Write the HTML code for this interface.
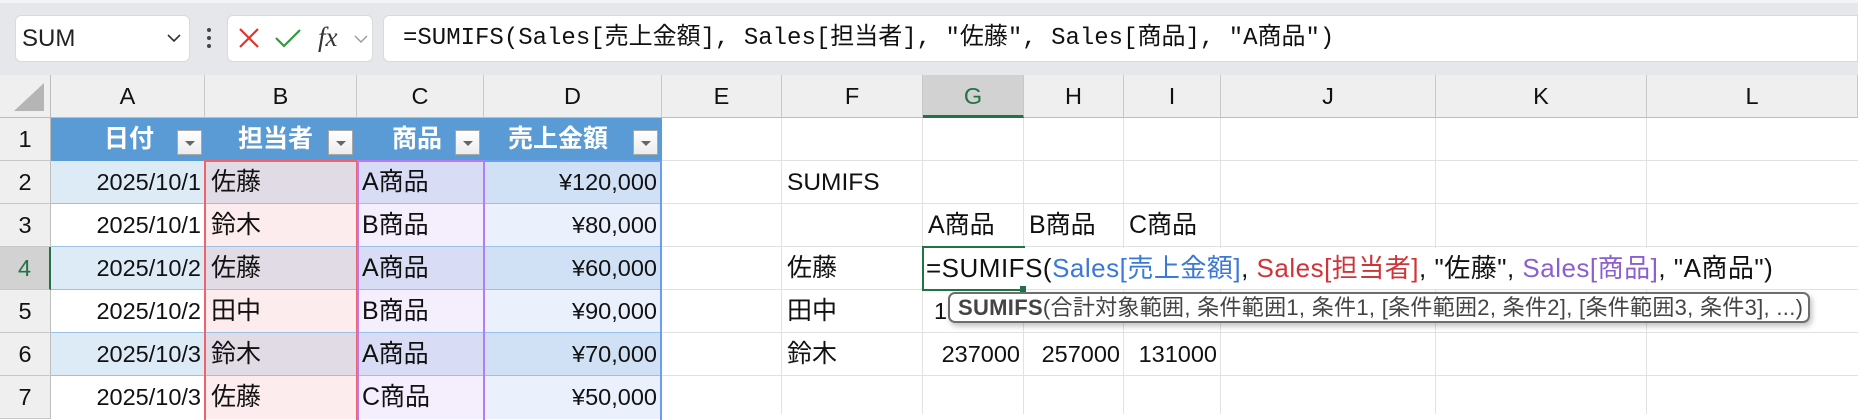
<!DOCTYPE html>
<html><head><meta charset="utf-8">
<style>
*{margin:0;padding:0;box-sizing:border-box}
body{width:1858px;height:414px;overflow:hidden;background:#fff;position:relative;font-family:"Liberation Sans","Noto Sans CJK JP",sans-serif;font-size:23.5px;color:#111}
.a{position:absolute}
.t{position:absolute;line-height:43px;height:43px;white-space:nowrap}
.j{font-size:25px}
.hl{position:absolute;height:1px;background:#e1e1e1}
.vl{position:absolute;width:1px;background:#e1e1e1}
.ch{position:absolute;top:75px;height:43px;line-height:43px;text-align:center;background:#efefef;border-right:1px solid #c8c8c8;border-bottom:1px solid #bdbdbd}
.rh{position:absolute;left:0;width:51px;height:43px;line-height:43px;text-align:center;background:#efefef;border-bottom:1px solid #c8c8c8;border-right:1px solid #bdbdbd}
.dd{position:absolute;width:25px;height:25px;background:linear-gradient(#fff,#ececec);border:1px solid #a8a8a8}
.dd:after{content:"";position:absolute;left:7px;top:10px;border-left:5px solid transparent;border-right:5px solid transparent;border-top:5px solid #666}
.hd{position:absolute;top:118px;height:43px;line-height:43px;color:#fff;font-weight:bold;font-size:25px}
</style></head><body>
<div class="a" style="left:0;top:0;width:1858px;height:75px;background:#e6e7ea"></div>
<div class="a" style="left:0;top:0;width:1858px;height:3px;background:#f4f4f6"></div>
<div class="a" style="left:15px;top:15px;width:175px;height:47px;background:#fff;border:1px solid #dadada;border-radius:6px"></div>
<div class="t" style="left:22px;top:17px;font-size:24px;color:#222">SUM</div>
<svg class="a" style="left:166px;top:32px" width="16" height="12"><path d="M2 3 L8 9 L14 3" stroke="#333" stroke-width="1.6" fill="none"/></svg>
<div class="a" style="left:207px;top:28px;width:4px;height:4px;background:#444;border-radius:2px"></div>
<div class="a" style="left:207px;top:36px;width:4px;height:4px;background:#444;border-radius:2px"></div>
<div class="a" style="left:207px;top:44px;width:4px;height:4px;background:#444;border-radius:2px"></div>
<div class="a" style="left:227px;top:15px;width:146px;height:47px;background:#fff;border:1px solid #dadada;border-radius:6px"></div>
<svg class="a" style="left:237px;top:26px" width="24" height="24"><path d="M3 3 L21 21 M21 3 L3 21" stroke="#e0352b" stroke-width="2.2"/></svg>
<svg class="a" style="left:274px;top:26px" width="28" height="24"><path d="M2 12 L10 20 L26 4" stroke="#2f9a3e" stroke-width="2.2" fill="none"/></svg>
<div class="t" style="left:318px;top:16px;font-family:'Liberation Serif',serif;font-style:italic;font-size:27px;color:#333">fx</div>
<svg class="a" style="left:353px;top:33px" width="16" height="12"><path d="M2 3 L8 9 L14 3" stroke="#999" stroke-width="1.4" fill="none"/></svg>
<div class="a" style="left:383px;top:15px;width:1475px;height:47px;background:#fff;border:1px solid #dadada;border-radius:6px 0 0 6px"></div>
<div class="t" style="left:403px;top:17px;font-family:'Liberation Mono','Noto Sans CJK JP',monospace;font-size:24px;color:#111">=SUMIFS(Sales[売上金額], Sales[担当者], "佐藤", Sales[商品], "A商品")</div>

<div class="a" style="left:0;top:75px;width:51px;height:43px;background:#efefef;border-right:1px solid #bdbdbd;border-bottom:1px solid #bdbdbd"></div>
<svg class="a" style="left:12px;top:81px" width="34" height="32"><path d="M32 2 L32 30 L2 30 Z" fill="#b5b5b5"/></svg>
<div class="ch" style="left:51px;width:154px">A</div>
<div class="ch" style="left:205px;width:152px">B</div>
<div class="ch" style="left:357px;width:127px">C</div>
<div class="ch" style="left:484px;width:178px">D</div>
<div class="ch" style="left:662px;width:120px">E</div>
<div class="ch" style="left:782px;width:141px">F</div>
<div class="ch" style="left:923px;width:101px;background:#d2d2d2;color:#217346;border-bottom:3px solid #217346">G</div>
<div class="ch" style="left:1024px;width:100px">H</div>
<div class="ch" style="left:1124px;width:97px">I</div>
<div class="ch" style="left:1221px;width:215px">J</div>
<div class="ch" style="left:1436px;width:211px">K</div>
<div class="ch" style="left:1647px;width:211px">L</div>

<div class="rh" style="top:118px">1</div>
<div class="rh" style="top:161px">2</div>
<div class="rh" style="top:204px">3</div>
<div class="rh" style="top:247px;background:#d2d2d2;color:#217346;border-right:2px solid #217346">4</div>
<div class="rh" style="top:290px">5</div>
<div class="rh" style="top:333px">6</div>
<div class="rh" style="top:376px">7</div>

<div id="grid"></div>
<div class="a" style="left:51px;top:118px;width:611px;height:43px;background:#5b9bd5"></div>
<div id="fills"></div>

<div class="hd" style="left:104px">日付</div><div class="dd" style="left:177px;top:130px"></div>
<div class="hd" style="left:238px">担当者</div><div class="dd" style="left:328px;top:130px"></div>
<div class="hd" style="left:392px">商品</div><div class="dd" style="left:455px;top:130px"></div>
<div class="hd" style="left:508px">売上金額</div><div class="dd" style="left:633px;top:130px"></div>

<div class="t" style="left:51px;width:150px;text-align:right;top:161px">2025/10/1</div>
<div class="t" style="left:51px;width:150px;text-align:right;top:204px">2025/10/1</div>
<div class="t" style="left:51px;width:150px;text-align:right;top:247px">2025/10/2</div>
<div class="t" style="left:51px;width:150px;text-align:right;top:290px">2025/10/2</div>
<div class="t" style="left:51px;width:150px;text-align:right;top:333px">2025/10/3</div>
<div class="t" style="left:51px;width:150px;text-align:right;top:376px">2025/10/3</div>
<div class="t j" style="left:211px;top:161px">佐藤</div>
<div class="t j" style="left:211px;top:204px">鈴木</div>
<div class="t j" style="left:211px;top:247px">佐藤</div>
<div class="t j" style="left:211px;top:290px">田中</div>
<div class="t j" style="left:211px;top:333px">鈴木</div>
<div class="t j" style="left:211px;top:376px">佐藤</div>
<div class="t j" style="left:362px;top:161px">A商品</div>
<div class="t j" style="left:362px;top:204px">B商品</div>
<div class="t j" style="left:362px;top:247px">A商品</div>
<div class="t j" style="left:362px;top:290px">B商品</div>
<div class="t j" style="left:362px;top:333px">A商品</div>
<div class="t j" style="left:362px;top:376px">C商品</div>
<div class="t" style="left:484px;width:173px;text-align:right;top:161px">¥120,000</div>
<div class="t" style="left:484px;width:173px;text-align:right;top:204px">¥80,000</div>
<div class="t" style="left:484px;width:173px;text-align:right;top:247px">¥60,000</div>
<div class="t" style="left:484px;width:173px;text-align:right;top:290px">¥90,000</div>
<div class="t" style="left:484px;width:173px;text-align:right;top:333px">¥70,000</div>
<div class="t" style="left:484px;width:173px;text-align:right;top:376px">¥50,000</div>

<div class="t" style="left:787px;top:161px;font-size:24.5px">SUMIFS</div>
<div class="t j" style="left:928px;top:204px">A商品</div>
<div class="t j" style="left:1029px;top:204px">B商品</div>
<div class="t j" style="left:1129px;top:204px">C商品</div>
<div class="t j" style="left:787px;top:247px">佐藤</div>
<div class="t j" style="left:787px;top:290px">田中</div>
<div class="t j" style="left:787px;top:333px">鈴木</div>
<div class="t" style="left:934px;top:290px">1</div>
<div class="t" style="left:923px;width:97px;text-align:right;top:333px">237000</div>
<div class="t" style="left:1024px;width:96px;text-align:right;top:333px">257000</div>
<div class="t" style="left:1124px;width:93px;text-align:right;top:333px">131000</div>

<div class="a" style="left:924px;top:248px;width:866px;height:41px;background:#fff"></div>
<div class="a" style="left:922px;top:246px;width:103px;height:45px;border:2px solid #217346;border-right:none"></div>
<div class="a" style="left:1020px;top:286px;width:6px;height:6px;background:#217346"></div>
<div class="t" style="left:926px;top:247px;font-size:26px;letter-spacing:.5px">=SUMIFS(<span style="color:#3b78d8">Sales[売上金額]</span>, <span style="color:#d13438">Sales[担当者]</span>, "佐藤", <span style="color:#8c5fd0">Sales[商品]</span>, "A商品")</div>

<div class="a" style="left:948px;top:292px;width:862px;height:31px;background:#fff;border:2px solid #6e6e6e;border-radius:7px;box-shadow:2px 3px 6px rgba(0,0,0,.25)"></div>
<div class="t" style="left:958px;top:286px;font-size:22px;letter-spacing:.3px;color:#444"><b>SUMIFS</b>(合計対象範囲, 条件範囲1, 条件1, [条件範囲2, 条件2], [条件範囲3, 条件3], ...)</div>

<script>
var g='';var xs=[205,357,484,662,782,923,1024,1124,1221,1436,1647];
xs.forEach(function(x){g+='<div class="vl" style="left:'+(x-1)+'px;top:118px;height:296px"></div>'});
[161,204,247,290,333,376].forEach(function(y){g+='<div class="hl" style="left:51px;top:'+(y-1)+'px;width:1807px"></div>'});
document.getElementById('grid').innerHTML=g;
var f='';var cols=[[51,154,'#ddebf7','#ffffff'],[205,152,'#e1dbe5','#fdeced'],[357,127,'#d9dcf5','#f4eefd'],[484,178,'#d0e1f5','#eaf1fc']];
var ys=[161,204,247,290,333,376];
cols.forEach(function(c){ys.forEach(function(y,i){f+='<div class="a" style="left:'+c[0]+'px;top:'+y+'px;width:'+c[1]+'px;height:43px;background:'+(i%2==0?c[2]:c[3])+'"></div>'})});
ys.slice(1).forEach(function(y){f+='<div class="a" style="left:51px;top:'+(y-1)+'px;width:611px;height:1px;background:#9bc2e6"></div>'});
f+='<div class="a" style="left:204px;top:160px;width:154px;height:260px;border:2px solid #ef636b;border-bottom:none"></div>';
f+='<div class="a" style="left:357px;top:160px;width:128px;height:260px;border:2px solid #b57cf6;border-bottom:none"></div>';
f+='<div class="a" style="left:484px;top:160px;width:178px;height:260px;border:2px solid #6a9ef0;border-bottom:none;border-left:none"></div>';
document.getElementById('fills').innerHTML=f;
</script>
</body></html>
